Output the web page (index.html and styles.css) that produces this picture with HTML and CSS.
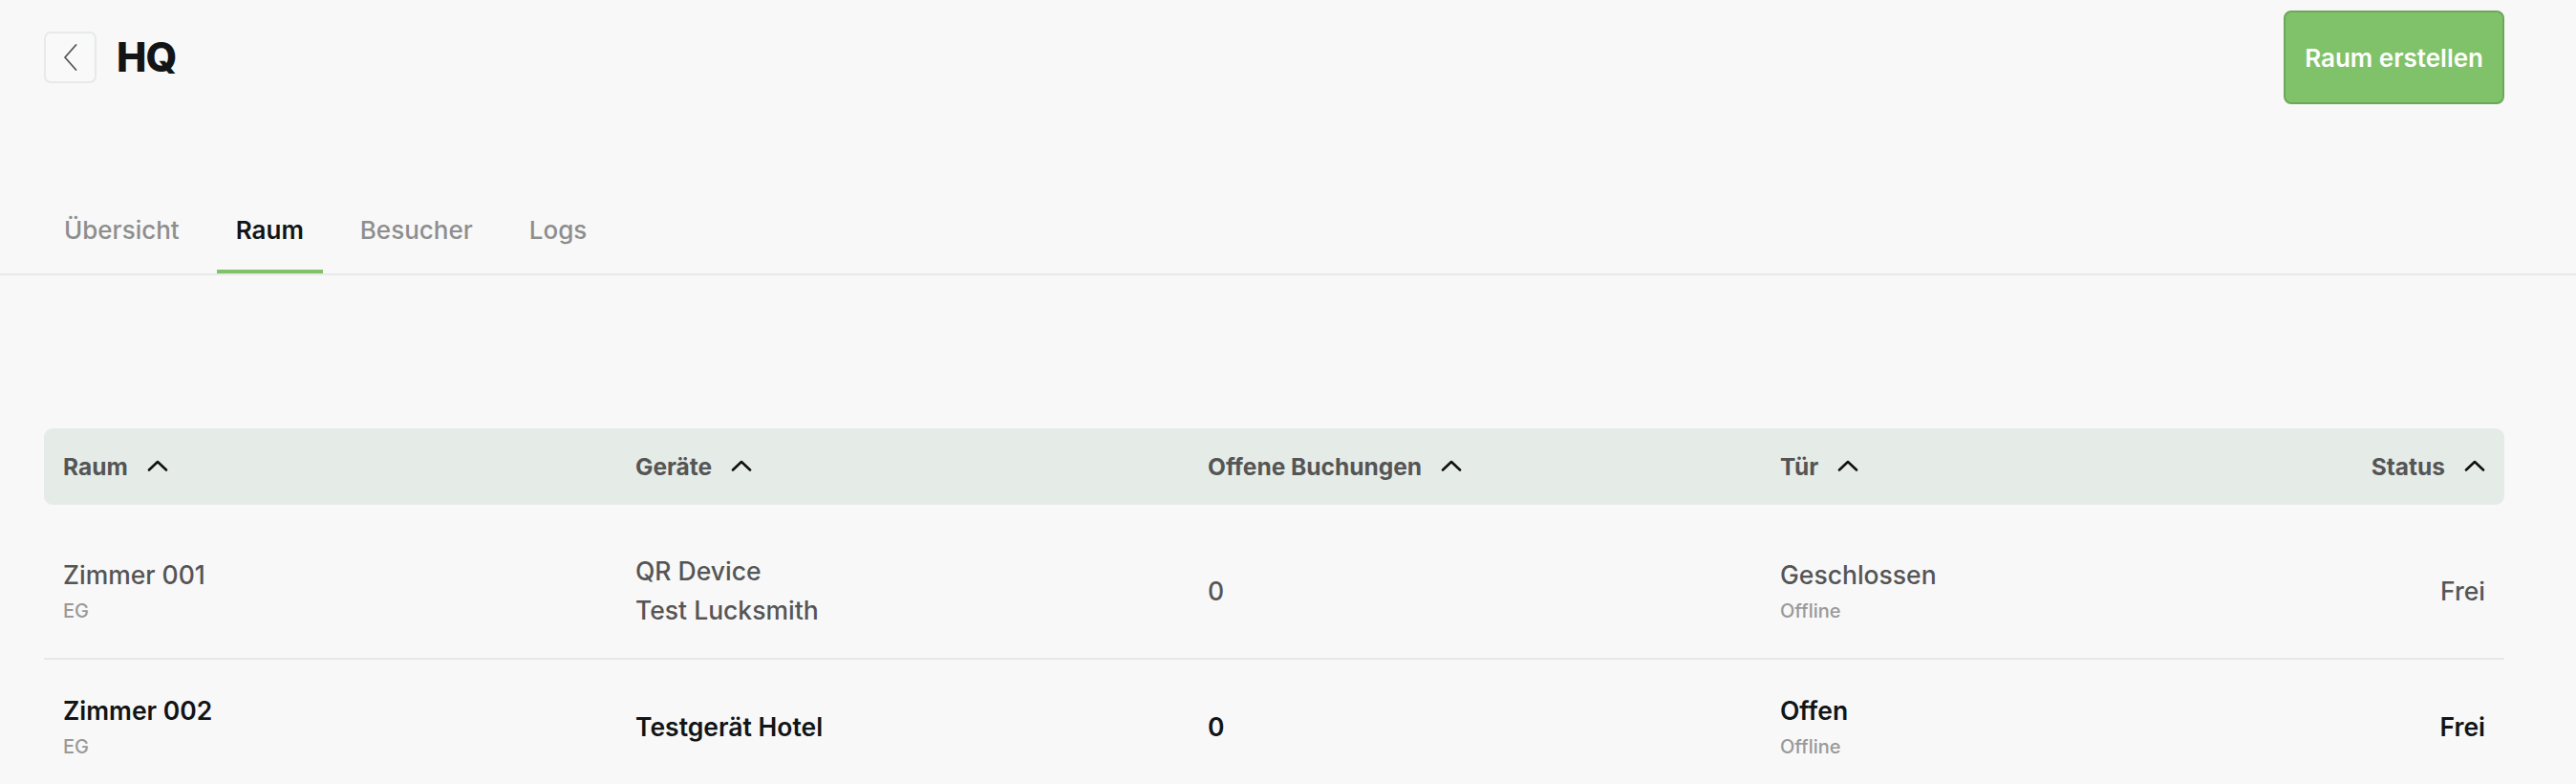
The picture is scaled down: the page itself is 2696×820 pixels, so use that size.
FILE: index.html
```html
<!DOCTYPE html>
<html lang="de">
<head>
<meta charset="utf-8">
<title>HQ</title>
<link rel="stylesheet" href="styles.css">
</head>
<body>
<div class="page">
  <header class="topbar">
    <div class="title-group">
      <button class="back-btn" aria-label="Zurück">
        <svg width="15" height="28" viewBox="0 0 15 28" fill="none"><path d="M13.5 1 L2 14 L13.5 27" stroke="#555" stroke-width="1.8" stroke-linecap="round" stroke-linejoin="round"/></svg>
      </button>
      <h1 class="title">HQ</h1>
    </div>
    <button class="primary-btn">Raum erstellen</button>
  </header>

  <nav class="tabs">
    <a class="tab">Übersicht</a>
    <a class="tab active">Raum</a>
    <a class="tab">Besucher</a>
    <a class="tab">Logs</a>
  </nav>

  <section class="table">
    <div class="thead">
      <div class="th">Raum <svg class="sort" width="22" height="12" viewBox="0 0 22 12" fill="none"><path d="M2 10.5 L11 2 L20 10.5" stroke="#111" stroke-width="2.6" stroke-linecap="round" stroke-linejoin="round"/></svg></div>
      <div class="th">Geräte <svg class="sort" width="22" height="12" viewBox="0 0 22 12" fill="none"><path d="M2 10.5 L11 2 L20 10.5" stroke="#111" stroke-width="2.6" stroke-linecap="round" stroke-linejoin="round"/></svg></div>
      <div class="th">Offene Buchungen <svg class="sort" width="22" height="12" viewBox="0 0 22 12" fill="none"><path d="M2 10.5 L11 2 L20 10.5" stroke="#111" stroke-width="2.6" stroke-linecap="round" stroke-linejoin="round"/></svg></div>
      <div class="th">Tür <svg class="sort" width="22" height="12" viewBox="0 0 22 12" fill="none"><path d="M2 10.5 L11 2 L20 10.5" stroke="#111" stroke-width="2.6" stroke-linecap="round" stroke-linejoin="round"/></svg></div>
      <div class="th th-right">Status <svg class="sort" width="22" height="12" viewBox="0 0 22 12" fill="none"><path d="M2 10.5 L11 2 L20 10.5" stroke="#111" stroke-width="2.6" stroke-linecap="round" stroke-linejoin="round"/></svg></div>
    </div>

    <div class="tbody">
      <div class="tr muted">
        <div class="td"><div class="main">Zimmer 001</div><div class="sub">EG</div></div>
        <div class="td"><div class="main">QR Device</div><div class="main second">Test Lucksmith</div></div>
        <div class="td"><div class="main">0</div></div>
        <div class="td"><div class="main">Geschlossen</div><div class="sub">Offline</div></div>
        <div class="td td-right"><div class="main">Frei</div></div>
      </div>
      <div class="tr strong">
        <div class="td"><div class="main">Zimmer 002</div><div class="sub">EG</div></div>
        <div class="td"><div class="main">Testgerät Hotel</div></div>
        <div class="td"><div class="main">0</div></div>
        <div class="td"><div class="main">Offen</div><div class="sub">Offline</div></div>
        <div class="td td-right"><div class="main">Frei</div></div>
      </div>
    </div>
  </section>
</div>
</body>
</html>
```

FILE: styles.css
```css
* { box-sizing: border-box; }

html, body {
  margin: 0;
  padding: 0;
  background: #f8f8f8;
  font-family: Inter, "Noto Sans", "Liberation Sans", sans-serif;
  color: #111;
  overflow: hidden;
}

.page {
  display: flex;
  flex-direction: column;
}

.topbar {
  display: flex;
  align-items: center;
  justify-content: space-between;
  padding: 11px 75px 0 46px;
}

.title-group {
  display: flex;
  align-items: center;
  gap: 21px;
}

.back-btn {
  width: 55px;
  height: 54px;
  border: 2px solid #e6eae8;
  border-radius: 7px;
  background: #f9f9f9;
  display: flex;
  align-items: center;
  justify-content: center;
  padding: 0;
}

.title {
  margin: 0;
  font-size: 42px;
  font-weight: 800;
  letter-spacing: -1px;
  color: #121416;
  line-height: 1;
}

.primary-btn {
  height: 98px;
  padding: 0 20px;
  background: #80c269;
  border: 2px solid #6ba859;
  border-radius: 8px;
  color: #fff;
  font-family: inherit;
  font-size: 26px;
  font-weight: 600;
}

.tabs {
  display: flex;
  gap: 19px;
  margin-top: 116px;
  padding-left: 47px;
  border-bottom: 2px solid #e6e9e8;
}

.tab {
  display: block;
  padding: 0 20px 25px;
  line-height: 32px;
  font-size: 26px;
  font-weight: 500;
  color: #8e8e8e;
  border-bottom: 4px solid transparent;
}

.tab.active {
  color: #121416;
  font-weight: 600;
  border-bottom-color: #80c269;
}

.table {
  margin: 160px 75px 0 46px;
}

.thead,
.tr {
  display: grid;
  grid-template-columns: repeat(4, 599px) 1fr;
  align-items: center;
}

.thead {
  height: 80px;
  background: #e5ece8;
  border-radius: 9px;
  margin-bottom: 20px;
}

.th {
  display: flex;
  align-items: center;
  gap: 20px;
  padding: 0 20px;
  font-size: 24.5px;
  font-weight: 700;
  color: #555;
}

.th-right,
.td-right {
  justify-content: flex-end;
  text-align: right;
}

.sort {
  display: block;
  margin-top: -2px;
}

.tr {
  min-height: 142px;
  border-bottom: 2px solid #e6e9e8;
}

.td {
  display: flex;
  flex-direction: column;
  padding: 0 20px;
}

.main {
  font-size: 26.5px;
  line-height: 31px;
  font-weight: 500;
}

.main.second {
  margin-top: 10px;
}

.sub {
  font-size: 20px;
  line-height: 24px;
  font-weight: 500;
  color: #999;
  margin-top: 10px;
}

.tr.muted .main { color: #555; }

.tr.strong .main {
  color: #121416;
  font-weight: 600;
}
```
